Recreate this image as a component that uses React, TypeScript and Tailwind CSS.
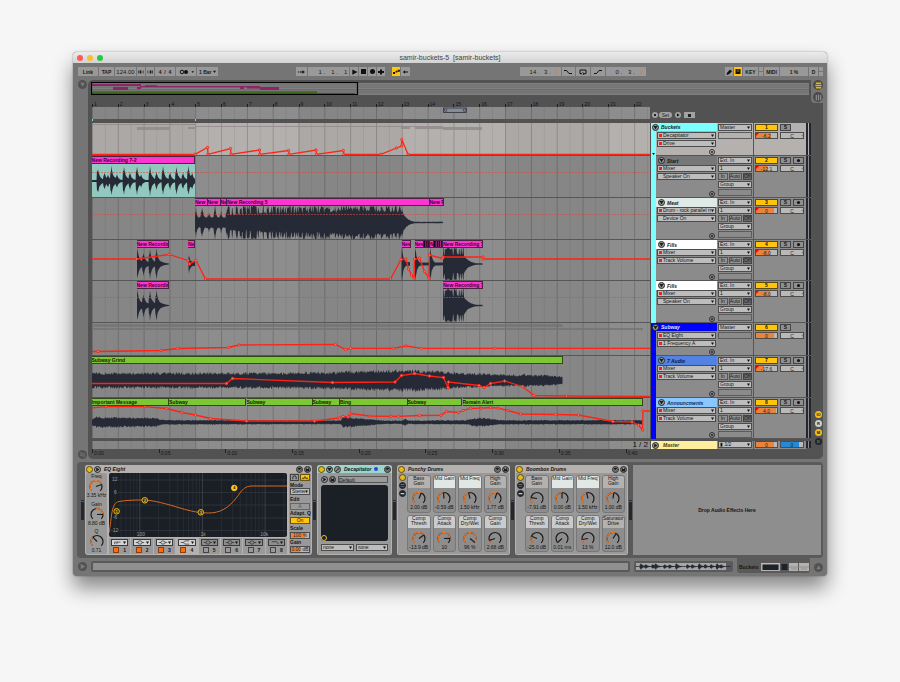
import React from "react";

/* ---------- timeline geometry ---------- */
const LANE_X = 92;
const LANE_W = 558;
const BAR = 25.82;
const pct = (n: number) => `${(n / LANE_W) * 100}%`;

type Pt = [number, number];
type Clip = { x0: number; x1: number; label: string; slices?: boolean };
type Hit = { x: number; a: number; d: number };

function rnd(i: number) {
  const s = Math.sin(i * 12.9898) * 43758.5453;
  return s - Math.floor(s);
}

function wave(x0: number, x1: number, mid: number, env: (x: number) => number, rough: number) {
  const up: string[] = [];
  const down: string[] = [];
  for (let x = x0; x <= x1; x += 0.5) {
    const a = env(x);
    up.push(`${x.toFixed(1)},${(mid - a * (1 - rough * rnd(x * 3.1))).toFixed(1)}`);
    down.unshift(`${x.toFixed(1)},${(mid + a * (1 - rough * rnd(x * 7.7 + 5))).toFixed(1)}`);
  }
  return `M${up.join("L")}L${down.join("L")}Z`;
}

const hits = (list: Hit[], floor = 0.6) => (x: number) =>
  list.reduce((m, h) => {
    const dx = x - h.x;
    if (dx < -1) return m;
    if (dx < 0) return Math.max(m, h.a * 0.7);
    return Math.max(m, h.a * (0.6 * Math.exp(-dx / 1.1) + 0.45 * Math.exp(-dx / h.d)));
  }, floor);

const ramp = (pts: Pt[]) => (x: number) => {
  for (let i = 1; i < pts.length; i++) {
    if (x <= pts[i][0]) {
      const [ax, ay] = pts[i - 1];
      const [bx, by] = pts[i];
      return ay + ((by - ay) * (x - ax)) / (bx - ax || 1);
    }
  }
  return pts[pts.length - 1][1];
};

const drumHits: Hit[] = [
  [97.7, 15], [104.5, 9], [108, 7], [111.5, 15], [117, 7], [124, 15], [130, 9], [137, 15], [141, 7],
  [150, 15], [156.5, 9], [163, 15], [170, 9], [176.5, 14], [183, 9], [188.5, 15], [192, 9],
].map(([x, a]) => ({ x, a, d: 4.5 }));

const fillHits: Hit[] = [[137.5, 16], [143.5, 12], [150, 15], [156.5, 15]].map(([x, a]) => ({ x, a, d: 5 }));

const meatEnv = (x: number) => {
  if (x < 228) return hits([[196, 15], [202, 18], [209, 11], [215, 18], [221, 12], [227, 16]].map(([hx, a]) => ({ x: hx, a, d: 6 })), 6)(x);
  if (x < 402) {
    const solid = ramp([[228, 9], [270, 11], [320, 12], [350, 14], [402, 13]])(x);
    return rnd(Math.floor(x) * 1.7) > 0.45 ? 17.5 : solid;
  }
  return Math.max(0.8, 14 * Math.exp(-(x - 402) / 4.5));
};

const endEnv = (x: number) =>
  x < 464 ? (rnd(Math.floor(x) * 2.3) > 0.75 ? 11 : 17.5) : Math.max(0.8, 10 * Math.exp(-(x - 464) / 5));

/* ---------- track data ---------- */
type Track = {
  top: number;
  name: string;
  num: number;
  group?: boolean;
  parent: "bucket" | "subway";
  head: string;
  size: string;
  params: [string, string];
  dots: [boolean, boolean];
  vol: string;
  fill: number;
  mark?: boolean;
  clips?: Clip[];
  tone?: "pink" | "green";
  waves?: string[];
  back?: [number, number];
  auto?: Pt[];
  dash?: number;
  minis?: [number, number, number, number][];
};

const tracks: Track[] = [
  {
    top: 123, name: "Buckets", num: 1, group: true, parent: "bucket", head: "bg-[#7dffff] text-[#123]", size: "h-[33px]",
    params: ["Decapitator", "Drive"], dots: [true, true], vol: "-6.2", fill: 70, mark: true,
    minis: [[92, 195, 124, 1], [137, 169, 127, 3], [188, 195, 127, 2], [195, 443, 126, 1], [401, 410, 127, 2], [415, 443, 127, 2], [443, 482, 127, 3]],
    auto: [[92, 154.3], [195, 154.3], [207.5, 147.5], [208, 154.3], [230.5, 148.5], [231, 154.3], [259.5, 150], [259.8, 154.3], [288.5, 150.5], [289, 154.3], [316, 150], [316.5, 154.3], [343.3, 150.5], [343.8, 154.3], [381, 154.3], [396.5, 148], [401.5, 146], [401.8, 139.5], [408, 154.3], [650, 154.3]],
  },
  {
    top: 156, name: "Start", num: 2, parent: "bucket", head: "bg-[#777] text-[#151515]", size: "h-[42px]",
    params: ["Mixer", "Speaker On"], dots: [true, false], vol: "-12.1", fill: 55, mark: true,
    clips: [{ x0: 91.5, x1: 195, label: "New Recording 7-2" }], tone: "pink", back: [92, 195],
    waves: [wave(92, 195, 181, hits(drumHits, 1), 0.15)], dash: 172.5,
  },
  {
    top: 198, name: "Meat", num: 3, parent: "bucket", head: "bg-[#dfe9e6] text-[#222]", size: "h-[42px]",
    params: ["Drum - rock parallel rm", "Device On"], dots: [true, false], vol: "0", fill: 84, mark: true,
    clips: [
      { x0: 195, x1: 207.5, label: "New" }, { x0: 207.5, x1: 220.5, label: "New" }, { x0: 220.5, x1: 227, label: "Ne" },
      { x0: 227, x1: 429.5, label: "New Recording 5" }, { x0: 429.5, x1: 443.5, label: "New F" },
    ],
    tone: "pink", waves: [wave(195, 443, 222.5, meatEnv, 0.25)], dash: 214.5,
  },
  {
    top: 240, name: "Fills", num: 4, parent: "bucket", head: "bg-white text-[#222]", size: "h-[41px]",
    params: ["Mixer", "Track Volume"], dots: [true, true], vol: "-8.0", fill: 65, mark: true,
    clips: [
      { x0: 136.5, x1: 169, label: "New Recordin" }, { x0: 188, x1: 195, label: "Ne" }, { x0: 401.5, x1: 410.5, label: "New" },
      { x0: 414.5, x1: 424, label: "New" }, { x0: 424, x1: 430, label: "", slices: true }, { x0: 430, x1: 434, label: "N" },
      { x0: 434, x1: 443, label: "", slices: true }, { x0: 443, x1: 482.5, label: "New Recording 7" },
    ],
    tone: "pink",
    waves: [
      wave(137, 169, 264, hits(fillHits, 0.6), 0.15), wave(188.5, 195, 264, hits([{ x: 189, a: 9, d: 5 }], 2), 0.2),
      wave(401.5, 410, 264, hits([{ x: 402, a: 17, d: 3 }], 2), 0.2),
      wave(415, 443, 264, hits([{ x: 415.5, a: 16, d: 3 }, { x: 430.5, a: 17, d: 3 }], 1.6), 0.2),
      wave(443, 482.5, 264, endEnv, 0.2),
    ],
    auto: [[92, 259], [136.5, 259], [169, 254.5], [188, 260.5], [189.5, 264], [196, 260.5], [205.5, 279], [390.5, 279], [401, 259.5], [406, 259], [408.5, 269], [411.5, 275], [414, 278], [414.5, 259], [419.5, 258], [424.5, 271.5], [429, 278], [429.5, 255], [442.5, 258.5], [443, 257], [483, 257], [483, 259], [650, 259]],
  },
  {
    top: 281, name: "Fills", num: 5, parent: "bucket", head: "bg-white text-[#222]", size: "h-[42px]",
    params: ["Mixer", "Speaker On"], dots: [true, false], vol: "-8.0", fill: 65, mark: true,
    clips: [{ x0: 136.5, x1: 169, label: "New Recordin" }, { x0: 443, x1: 482.5, label: "New Recording 7" }], tone: "pink",
    waves: [wave(137, 169, 305.5, hits(fillHits, 0.6), 0.15), wave(443, 482.5, 305.5, endEnv, 0.2)], dash: 297.5,
  },
  {
    top: 323, name: "Subway", num: 6, group: true, parent: "subway", head: "bg-[#0000ff] text-[#dfe3ff]", size: "h-[33px]",
    params: ["EQ Eight", "1 Frequency A"], dots: [true, true], vol: "0", fill: 84,
    minis: [[92, 562.5, 324, 3], [92, 643, 328, 2]],
    auto: [[92, 351.5], [98, 351.5], [161, 350.5], [177.5, 348.5], [228.5, 347.5], [239, 345], [335.5, 344.5], [345.5, 349.5], [350.5, 348.3], [393.5, 348.3], [406, 346], [421.5, 348.3], [495, 348.3], [650, 348.3]],
  },
  {
    top: 356, name: "7 Audio", num: 7, parent: "subway", head: "bg-[#5283e2] text-[#0c1a44]", size: "h-[42px]",
    params: ["Mixer", "Track Volume"], dots: [true, true], vol: "-17.6", fill: 40, mark: true,
    clips: [{ x0: 91.5, x1: 563, label: "Subway Grind" }], tone: "green",
    waves: [wave(92, 562.5, 380.5, ramp([[92, 8.5], [280, 8.5], [340, 9.5], [400, 11.5], [425, 11], [470, 8], [518, 6], [523, 8], [528, 6], [550, 6], [562, 4]]), 0.36)],
    auto: [[92, 383.5], [226.5, 383.5], [232.5, 378.5], [332.5, 382.5], [395, 382], [401.5, 375.5], [414.5, 373.5], [429.5, 376], [443.5, 377.5], [448, 387.5], [448.5, 382], [479, 385.5], [484, 387.5], [490.5, 383.5], [504.5, 381], [522.5, 386.5], [534, 395.5], [566.5, 396], [650, 396.3]],
  },
  {
    top: 398, name: "Announcments", num: 8, parent: "subway", head: "bg-[#8ac6ff] text-[#10325c]", size: "h-[41px]",
    params: ["Mixer", "Track Volume"], dots: [true, true], vol: "4.0", fill: 95, mark: true,
    clips: [
      { x0: 91.5, x1: 169, label: "Important Message" }, { x0: 169, x1: 246.5, label: "Subway" }, { x0: 246.5, x1: 312.5, label: "Subway" },
      { x0: 312.5, x1: 340, label: "Subway" }, { x0: 340, x1: 407.5, label: "Bing" }, { x0: 407.5, x1: 462.5, label: "Subway" },
      { x0: 462.5, x1: 643, label: "Remain Alert" },
    ],
    tone: "green",
    waves: [wave(92, 642, 422.3, ramp([[92, 3], [96, 6], [155, 5], [164, 2.6], [341, 2.2], [343, 6], [358, 4.5], [375, 3], [385, 2], [402, 2], [405, 4.5], [408, 2], [465, 2.5], [478, 5], [492, 4], [500, 2.5], [642, 2.4]]), 0.4)],
    auto: [[92, 407.8], [106, 406.7], [145, 406.7], [166.5, 408.5], [182, 412.5], [195.5, 415], [210.5, 418.5], [246.5, 421], [314.5, 421], [339, 418], [343, 416.5], [348, 417], [350, 413.5], [370, 416], [391, 416.3], [398.5, 416.3], [419.5, 415.5], [441, 415.3], [446.5, 411.5], [458.5, 412.5], [463, 410.5], [470.5, 408.3], [481, 408.2], [490.5, 407.7], [498, 408.2], [508, 410.5], [520.5, 414], [555.5, 414.5], [578.5, 415], [613, 421.5], [632, 422], [638.5, 425], [642.5, 430], [643, 411], [650, 411]],
  },
];

/* ---------- shared pieces ---------- */
function Grid({ top, height, light }: { top: number; height: number; light?: boolean }) {
  const lines = [];
  for (let i = 0; i < 44; i++) {
    const x = LANE_X + (i * BAR) / 2;
    lines.push(<rect key={i} x={x} y={top} width={i % 2 ? 0.6 : 0.9} height={height} fill="#000" opacity={i % 2 ? 0.1 : 0.2} />);
  }
  return (
    <>
      <rect x={LANE_X} y={top} width={LANE_W} height={height} fill={light ? "#aca8a6" : "#868686"} />
      {[4, 12, 20].map((b) => (
        <rect key={b} x={LANE_X + b * BAR} y={top} width={Math.min(4 * BAR, LANE_W - b * BAR)} height={height} fill={light ? "#b4b0ae" : "#8d8d8d"} />
      ))}
      {lines}
    </>
  );
}

function Drop({ label, value, dot, indent }: { label: string; value: string; dot?: boolean; indent?: boolean }) {
  return (
    <div className="relative flex h-[7px] w-full min-w-0 items-center border border-[#4c4c4c] bg-[#bdbdbd]">
      {dot && <i className="ml-px size-[3px] shrink-0 bg-[#f02314]" />}
      {indent && !dot && <i className="w-[4px] shrink-0" />}
      <select aria-label={label} className="h-[5px] w-full min-w-0 appearance-none bg-transparent pr-1 pl-px leading-[5px] text-[#151515] outline-none">
        <option>{value}</option>
      </select>
      <svg viewBox="0 0 4 4" className="pointer-events-none absolute top-px right-px size-[3px]"><path d="M0 .5H4L2 4Z" fill="#111" /></svg>
    </div>
  );
}

function Value({ label, value, fill, tone, mark, knob }: { label: string; value: string; fill: number; tone: string; mark?: boolean; knob?: boolean }) {
  return (
    <div className="relative h-[7px] w-full border border-[#4c4c4c] bg-[#b9b9b9]">
      <div className={`absolute inset-y-0 left-0 ${tone}`} style={{ width: `${fill}%` }} />
      {mark && <svg viewBox="0 0 3 3" className="absolute top-0 left-0 size-[3px]"><path d="M0 0H3L0 3Z" fill="#f00" /></svg>}
      {knob && <svg viewBox="0 0 3 4" className="absolute top-px right-0 h-[3px] w-[2px]"><path d="M3 0V4L0 2Z" fill="#888" /></svg>}
      <input aria-label={label} defaultValue={value} className="absolute inset-0 h-[5px] w-full bg-transparent text-center leading-[5px] text-[#222] outline-none" />
    </div>
  );
}

function Round({ label, children, className = "" }: { label: string; children?: React.ReactNode; className?: string }) {
  return (
    <button aria-label={label} className={`grid size-[7px] shrink-0 place-items-center rounded-full border ${className || "border-[#2a2a2a] bg-[#9a9a9a] text-[#1c1c1c]"}`}>
      <svg viewBox="0 0 8 8" className="size-[5px]" fill="currentColor" stroke="none">{children}</svg>
    </button>
  );
}

const wrench = <path d="M1 6.2 4 3.4A2 2 0 0 1 6.4 1L5.2 2.3 6 3 7.2 1.8A2 2 0 0 1 4.8 4.2L2 7.2Z" />;
const downTri = <path d="M.8 1.5H7.2L4 7Z" />;
const rightTri = <path d="M2 .8 7 4 2 7.2Z" />;
const disk = <path d="M1 1H6L7 2V7H1ZM2.5 1.5V3.2H5.2V1.5Z" fillRule="evenodd" />;
const hot = <path d="M4 .8a3.2 3.2 0 1 0 .1 0M2 3 4 5.2 6.4 2.4 6 5.5 4 6.5 2 5.5Z" fillRule="evenodd" />;

/* ---------- transport bar ---------- */
function Cell({ w, children, label, on }: { w: string; children: React.ReactNode; label?: string; on?: boolean }) {
  return (
    <button aria-label={label} className={`flex h-[9px] items-center justify-center whitespace-pre ${w} ${on ? "bg-[#ffc40c]" : "bg-[#999]"}`}>
      {children}
    </button>
  );
}

function Glyph({ d, w = "w-[8px]", stroke }: { d: string; w?: string; stroke?: boolean }) {
  return (
    <svg viewBox="0 0 8 6" className={`h-[6px] ${w}`} fill={stroke ? "none" : "#111"} stroke={stroke ? "#111" : "none"} strokeWidth="1">
      <path d={d} />
    </svg>
  );
}

function Position({ w, parts }: { w: string; parts: [string, string, string] }) {
  return (
    <Cell w={w}>
      <span className="flex w-full justify-between pr-[2px] pl-[10px] text-[6px] font-normal">
        <span>{parts[0]}</span><span>{parts[1]}</span>
        <span className={parts[2] === "2" ? "text-[#e07a2c]" : ""}>{parts[2]}</span>
      </span>
    </Cell>
  );
}

function Transport() {
  return (
    <div className="flex h-[17px] items-center pr-1 pl-[5px] font-bold text-[#1a1a1a]">
      <div className="flex gap-px">
        <Cell w="w-[20px]">Link</Cell>
        <Cell w="w-[15px]">TAP</Cell>
        <Cell w="w-[21px]"><span className="text-[6px] font-normal">124.00</span></Cell>
        <Cell w="w-[8px]" label="Nudge down"><Glyph d="M.5 1H1.8V5H.5ZM2.7 1H4V5H2.7ZM4.9 1H5.6V5H4.9ZM7 1H7.6V5H7Z" w="w-[6px]" /></Cell>
        <Cell w="w-[8px]" label="Nudge up"><Glyph d="M.5 1H1V5H.5ZM2.4 1H3V5H2.4ZM4 1H5.3V5H4ZM6.2 1H7.5V5H6.2Z" w="w-[6px]" /></Cell>
        <Cell w="w-[20px]">4  /  4</Cell>
        <Cell w="w-[20px]" label="Metronome">
          <svg viewBox="0 0 18 6" className="h-[6px] w-[18px]"><circle cx="5" cy="3" r="1.8" fill="none" stroke="#111" /><circle cx="9" cy="3" r="2" fill="#111" /><path d="M14.5 2.2H17L15.8 4Z" fill="#111" /></svg>
        </Cell>
        <Cell w="w-[21px]" label="Quantization">
          1 Bar <svg viewBox="0 0 4 4" className="size-[3px]"><path d="M0 1H4L2 4Z" fill="#111" /></svg>
        </Cell>
      </div>
      <div className="grow-[79]" />
      <div className="flex gap-px">
        <Cell w="w-[11px]" label="Follow"><Glyph d="M0 2.5H1.2V3.5H0ZM2 2.5H5V1L8 3 5 5V3.5H2Z" w="w-[7px]" /></Cell>
        <Position w="w-[41px]" parts={["1 .", "1 .", "1"]} />
        <Cell w="w-[8px]" label="Play"><Glyph d="M1.5 0 7.5 3 1.5 6Z" w="w-[7px]" /></Cell>
        <Cell w="w-[8px]" label="Stop"><i className="size-[5px] bg-[#111]" /></Cell>
        <Cell w="w-[8px]" label="Record"><i className="size-[5px] rounded-full bg-[#111]" /></Cell>
        <Cell w="w-[8px]" label="Overdub"><Glyph d="M3 .5H5V2H7V4H5V5.5H3V4H1V2H3Z" /></Cell>
        <i className="w-[5px]" />
        <Cell w="w-[8px]" label="Automation arm" on><Glyph d="M0 3H2.4V5.4H0ZM3 1.7H5V3.7H3ZM5.4 .4H7.8V2.8H5.4Z" w="w-[7px]" /></Cell>
        <Cell w="w-[9px]" label="Re-enable automation"><Glyph d="M1 3 3.5 1V2.5H7V3.5H3.5V5Z" w="w-[7px]" /></Cell>
      </div>
      <div className="grow-[110]" />
      <div className="flex gap-px">
        <Position w="w-[41px]" parts={["14 .", "3 .", "2"]} />
        <Cell w="w-[13px]" label="Punch in"><Glyph d="M0 1.5H2.5L5 4.5H8" stroke /></Cell>
        <Cell w="w-[14px]" label="Loop"><Glyph d="M3 4.7H1V1H7V4.7H5M3.5 3.4 5 4.7 3.5 6" stroke /></Cell>
        <Cell w="w-[14px]" label="Punch out"><Glyph d="M0 4.5H2.5L5 1.5H8" stroke /></Cell>
        <Position w="w-[40px]" parts={["0 .", "3 .", "2"]} />
      </div>
      <div className="grow-[80]" />
      <div className="flex gap-px">
        <Cell w="w-[8px]" label="Draw mode"><Glyph d="M1.5 6 2 3.8 5 .6 7 2.2 4 5.2Z" /></Cell>
        <Cell w="w-[8px]" label="Computer keyboard" on><Glyph d="M1.5 0H2.9V3H3.3V0H4.7V3H5.1V0H6.5V5H1.5Z" /></Cell>
        <Cell w="w-[15px]">KEY</Cell>
        <Cell w="w-[4px]" label="Key indicator"><i className="h-px w-full bg-[#777]" /></Cell>
        <Cell w="w-[15px]">MIDI</Cell>
        <Cell w="w-[28px]">1 %</Cell>
        <Cell w="w-[9px]">D</Cell>
        <Cell w="w-[4px]" label="MIDI indicator"><i className="h-px w-full bg-[#777]" /></Cell>
      </div>
    </div>
  );
}

/* ---------- arrangement ---------- */
function Overview() {
  const bars: [number, number, number, number, string][] = [
    [92, 84, 49, 2, "#8c2468"], [113, 87, 15, 3, "#8c2468"], [137, 87, 4, 2, "#8c2468"], [140, 86, 120, 1.3, "#8c2468"],
    [145, 85.3, 12, 1, "#6e3058"], [240, 87, 4, 2, "#8c2468"], [247, 87, 13, 1.6, "#8c2468"], [260, 87, 19, 3, "#8c2468"], [92, 91.3, 225, 2.7, "#3d6a1e"], [317, 93, 38, 1, "#3d6a1e"],
  ];
  return (
    <svg viewBox="91 82 718 13" preserveAspectRatio="none" className="block h-[13px] w-full">
      <rect x="91" y="83" width="718" height="12" fill="#808080" />
      {[84.6, 86.7, 89, 90.7, 92.6].map((y) => <rect key={y} x="91" y={y} width="718" height=".6" fill="#626262" />)}
      {bars.map(([x, y, w, h, f], i) => <rect key={i} x={x} y={y} width={w} height={h} fill={f} />)}
      <rect x="91.5" y="82.5" width="266" height="12" fill="none" stroke="#000" strokeWidth="1.2" />
    </svg>
  );
}

function Lane({ t }: { t: Track }) {
  const h = t.group ? 33 : t.size === "h-[42px]" ? 42 : 41;
  return (
    <div className="relative min-w-0 flex-1 overflow-hidden border-b border-[#565656]">
      <svg viewBox={`${LANE_X} ${t.top} ${LANE_W} ${h - 1}`} preserveAspectRatio="none" className="block size-full">
        <Grid top={t.top} height={h} light={t.num === 1} />
        {t.back && <rect x={t.back[0]} y={t.top + 8} width={t.back[1] - t.back[0]} height={h - 8} fill="#92c9bf" />}
        {t.minis?.map(([a, b, y, mh], i) => <rect key={i} x={a} y={y} width={b - a} height={mh} fill={t.num === 1 ? "#8e8a88" : "#737373"} opacity=".8" />)}
        {t.waves?.map((d, i) => <path key={i} d={d} fill="#262a37" />)}
        {t.dash && <path d={`M92 ${t.dash}H650`} stroke="#d8493c" strokeWidth=".8" strokeDasharray="2 1" opacity=".75" />}
        {t.auto && (
          <g fill="none" stroke="#ff2315">
            <path d={`M${t.auto.map((p) => p.join(",")).join("L")}`} strokeWidth="1.3" />
            {t.auto.slice(1, -1).map(([x, y], i) => <circle key={i} cx={x} cy={y} r="1.2" strokeWidth=".9" fill="#d98a80" />)}
          </g>
        )}
      </svg>
      {t.clips?.map((c, i) => (
        <div
          key={i}
          className={`absolute top-0 h-[8px] overflow-hidden border-y border-r font-bold whitespace-nowrap leading-[6px] ${t.tone === "green" ? "border-[#33471d] bg-[#7bc832] text-[#14240a]" : "border-[#4a2442] bg-[#ff35d2] text-[#3a0530]"}`}
          style={{ left: pct(c.x0 - LANE_X), width: pct(c.x1 - c.x0) }}
        >
          {c.slices ? (
            <svg viewBox="0 0 9 6" preserveAspectRatio="none" className="block size-full"><path d="M0 0H2V6H0ZM2.8 0H5V6H2.8ZM5.5 0H6.8V6H5.5ZM7.5 0H9V6H7.5Z" fill="#1c0718" /></svg>
          ) : c.label}
        </div>
      ))}
    </div>
  );
}

function Strip({ t }: { t: Track }) {
  const tone = t.num === 1 ? "bg-[#b5b1af]" : "bg-[#8b8b8b]";
  const bar = t.parent === "bucket" ? "bg-[#7dffff]" : "bg-[#0000ff]";
  return (
    <div className="flex w-[160px] shrink-0">
      <div className="flex w-[66px] flex-col">
        {t.group && (
          <div className={`flex h-[8px] items-center gap-[2px] pl-px font-bold italic ${t.head}`}>
            <Round label="Fold group">{downTri}</Round><span>{t.name}</span>
          </div>
        )}
        <div className="flex min-h-0 flex-1">
          <div className={`flex w-[5px] items-end justify-center pb-px ${bar}`}>
            {t.group && <svg viewBox="0 0 4 3" className="h-[2px] w-[3px]"><path d="M0 0H4L2 3Z" /></svg>}
          </div>
          <div className={`flex min-w-0 flex-1 flex-col border-b border-[#565656] ${tone}`}>
            {!t.group && (
              <div className={`flex h-[9px] items-center gap-[2px] pl-[2px] font-bold italic ${t.head}`}>
                <Round label="Fold track">{downTri}</Round><span>{t.name}</span>
              </div>
            )}
            <div className={`flex flex-col gap-px px-px ${t.group ? "pt-px" : ""}`}>
              <Drop label={`${t.name} device`} value={t.params[0]} dot={t.dots[0]} indent />
              <Drop label={`${t.name} parameter`} value={t.params[1]} dot={t.dots[1]} indent />
            </div>
            <div className="mt-auto mr-[2px] self-end">
              <button aria-label="Add lane" className="grid size-[6px] place-items-center rounded-full border border-[#333]"><i className="size-[2px] rounded-full bg-[#222]" /></button>
            </div>
          </div>
        </div>
      </div>
      <div className={`flex w-[37px] flex-col gap-px border-r border-b border-[#565656] px-px pt-px ${tone}`}>
        <Drop label="Input" value={t.group ? "Master" : "Ext. In"} />
        {t.group ? <div className="h-[7px] border border-[#5b5b5b]" /> : (
          <>
            <Drop label="Channel" value="1" />
            <div className="flex h-[7px] gap-px leading-[5px]">
              <button className="flex-1 border border-[#555] bg-[#939393]">In</button>
              <button className="w-[13px] border border-[#555] bg-[#939393]">Auto</button>
              <button className="flex-1 border border-[#444] bg-[#6d6d6d]">Off</button>
            </div>
            <Drop label="Output" value="Group" />
            <div className="h-[7px] border border-[#5b5b5b]" />
          </>
        )}
      </div>
      <div className={`flex flex-1 flex-col gap-px border-b border-[#565656] px-px pt-px ${tone}`}>
        <div className="flex h-[7px] gap-[2px] font-bold leading-[5px]">
          <button className="w-[23px] border border-[#5a4a10] bg-[#ffc40c]">{t.num}</button>
          <button className="w-[11px] border border-[#444] bg-[#8f8f8f]">S</button>
          {!t.group && <button aria-label="Arm" className="grid w-[11px] place-items-center border border-[#444] bg-[#8f8f8f]"><i className="size-[3px] rounded-full bg-[#111]" /></button>}
        </div>
        <div className="flex gap-[2px]">
          <div className="w-[23px]"><Value label="Volume" value={t.vol} fill={t.fill} tone="bg-[#e8843c]" mark={t.mark} /></div>
          <div className="w-[24px]"><Value label="Pan" value="C" fill={0} tone="bg-[#e8843c]" knob /></div>
        </div>
      </div>
      <Meter tone={tone} />
    </div>
  );
}

function Meter({ tone }: { tone: string }) {
  return (
    <div className={`flex w-[5px] gap-px border-b border-[#565656] ${tone}`}>
      <i className="w-[2px] bg-[#23262e]" /><i className="w-[2px] bg-[#23262e]" />
    </div>
  );
}

function Arrangement() {
  return (
    <div className="flex">
      <div className="flex w-[15px] flex-col items-center justify-between pl-[3px]">
        <Gutter label="Browser"><path d="M1.5 2H6.5L4 6.5Z" /></Gutter>
        <Gutter label="Groove pool"><path d="M1 3Q2.5 1.5 4 3T7 3M1 5.3Q2.5 3.8 4 5.3T7 5.3" fill="none" stroke="currentColor" /></Gutter>
      </div>
      <div className="relative mr-1 min-w-0 flex-1 rounded-[5px] bg-[#525252] pt-[2px] pr-[12px] pl-[3px]">
        <div className="absolute top-0 right-0 flex h-[23px] w-[12px] flex-col items-end gap-[2px] rounded-bl-[4px] bg-[#757575]">
          <button aria-label="Arrangement view" className="grid size-[10px] place-items-center rounded-full bg-[#4b4b4b]">
            <svg viewBox="0 0 8 8" className="size-[7px]"><path d="M1 1.5H7M.5 4H7.5M1 6.5H7" stroke="#e8b417" strokeWidth="1.6" /></svg>
          </button>
          <button aria-label="Session view" className="grid size-[10px] place-items-center rounded-full bg-[#4b4b4b]">
            <svg viewBox="0 0 8 8" className="size-[7px]"><path d="M1.5 1V7M4 .5V7.5M6.5 1V7" stroke="#8b8b8b" strokeWidth="1.4" /></svg>
          </button>
        </div>
        <div className="pr-[2px]"><Overview /></div>

        {/* bar ruler */}
        <div className="mt-[5px] ml-px flex h-[7px] overflow-hidden pr-[161px] text-[#141414]">
          {Array.from({ length: 22 }, (_, i) => (
            <div key={i} className="flex shrink-0 items-end leading-[6px]" style={{ width: i === 21 ? pct(14) : pct(BAR) }}>
              <i className="mr-px h-[3px] w-px bg-[#1c1c1c]" />{i + 1}
            </div>
          ))}
        </div>

        {/* scrub area */}
        <div className="ml-px flex h-[12px]">
          <div className="relative min-w-0 flex-1">
            <svg viewBox={`${LANE_X} 107 ${LANE_W} 12`} preserveAspectRatio="none" className="block size-full">
              <Grid top={107} height={12} />
              <rect x="443.5" y="108" width="23" height="4.5" fill="#868b96" stroke="#2e3340" strokeWidth=".8" />
              <circle cx="445.5" cy="110.2" r="1.3" fill="none" stroke="#2e3340" strokeWidth=".7" />
              <circle cx="464.5" cy="110.2" r="1.3" fill="none" stroke="#2e3340" strokeWidth=".7" />
            </svg>
          </div>
          <div className="ml-px flex w-[160px] items-end gap-px pb-px pl-px leading-[6px] text-[#222]">
            <button aria-label="Previous locator" className="grid size-[6px] place-items-center rounded-full bg-[#a2a2a2]"><i className="size-[2px] bg-[#222]" /></button>
            <button className="h-[6px] w-[13px] rounded-full bg-[#a2a2a2] leading-[6px]">Set</button>
            <i className="w-px" />
            <button aria-label="Next locator" className="grid size-[6px] place-items-center rounded-full bg-[#a2a2a2]"><svg viewBox="0 0 8 8" className="size-[4px]">{rightTri}</svg></button>
            <i className="w-px" />
            <button aria-label="Lock envelopes" className="grid h-[6px] w-[11px] place-items-center bg-[#a2a2a2]"><i className="h-[3px] w-[3px] bg-[#222]" /></button>
          </div>
        </div>
        <div className="ml-px flex h-[4px] pr-[161px]"><i className="h-[2px] w-px bg-[#7de0e4]" /><i className="h-[2px] w-px bg-[#7de0e4]" style={{ marginLeft: pct(4 * BAR - 1) }} /></div>

        {tracks.map((t) => (
          <div key={t.num} className={`ml-px flex ${t.size}`}>
            <Lane t={t} />
            <div className="w-px" />
            <Strip t={t} />
          </div>
        ))}

        {/* master */}
        <div className="ml-px flex pt-[2px]">
          <div className="relative h-[8px] min-w-0 flex-1">
            <svg viewBox={`${LANE_X} 441 ${LANE_W} 8`} preserveAspectRatio="none" className="block size-full"><Grid top={441} height={8} /></svg>
            <span className="absolute top-0 right-[2px] text-[8px] leading-[8px] text-[#111]">1 / 2</span>
          </div>
          <div className="ml-px flex h-[8px] w-[160px] bg-[#8b8b8b]">
            <div className="flex w-[66px] items-center gap-1 bg-[#ffee9e] pl-px font-bold text-[#4a3c0a] italic"><Round label="Unfold master">{rightTri}</Round>Master</div>
            <div className="w-[37px] border-r border-[#565656] px-px"><Drop label="Master output" value="▮ 1/2" /></div>
            <div className="flex flex-1 gap-[2px] px-px">
              <div className="w-[23px]"><Value label="Master volume" value="0" fill={84} tone="bg-[#e8843c]" /></div>
              <div className="w-[24px]"><Value label="Cue volume" value="0" fill={84} tone="bg-[#2389d8]" /></div>
            </div>
            <Meter tone="bg-[#8b8b8b]" />
          </div>
        </div>

        {/* time ruler */}
        <div className="ml-px flex h-[10px] overflow-hidden pr-[161px] leading-[8px] text-[#161616]">
          {["0:00", "0:05", "0:10", "0:15", "0:20", "0:25", "0:30", "0:35", "0:40"].map((s, i) => (
            <div key={s} className="flex shrink-0" style={{ width: i === 8 ? pct(24) : pct(66.7) }}><i className="mr-px h-[4px] w-px bg-[#222]" />{s}</div>
          ))}
        </div>

        <div className="absolute right-0 bottom-[14px] flex flex-col gap-[2px] text-[4px] font-bold">
          <Toggle tone="bg-[#f5bd1f]">IO</Toggle>
          <Toggle tone="bg-[#d0d0d0]">R</Toggle>
          <Toggle tone="bg-[#f5bd1f]">M</Toggle>
          <Toggle tone="bg-[#22262c] text-[#777]">D</Toggle>
        </div>
      </div>
    </div>
  );
}

function Toggle({ tone, children }: { tone: string; children: string }) {
  return <button className={`mr-px size-[7px] rounded-full leading-[7px] ${tone}`}>{children}</button>;
}

function Gutter({ label, children }: { label: string; children: React.ReactNode }) {
  return (
    <button aria-label={label} className="grid size-[9px] shrink-0 place-items-center rounded-full bg-[#525252] text-[#7c7c7c]">
      <svg viewBox="0 0 8 8" className="size-[7px]" fill="currentColor">{children}</svg>
    </button>
  );
}

/* ---------- devices ---------- */
function Knob({ v, from = 0, flag }: { v: number; from?: number; flag?: boolean }) {
  const at = (f: number, r: number) => {
    const a = ((135 + 270 * f) * Math.PI) / 180;
    return `${(8 + r * Math.cos(a)).toFixed(2)} ${(7.5 + r * Math.sin(a)).toFixed(2)}`;
  };
  const arc = (a: number, b: number) => `M${at(a, 6)}A6 6 0 ${(b - a) * 270 > 180 ? 1 : 0} 1 ${at(b, 6)}`;
  return (
    <svg viewBox="0 0 16 14" className="h-[14px] w-[16px]" fill="none" strokeWidth="1.2">
      <path d={arc(0, 1)} stroke="#1c1c1c" />
      <path d={arc(Math.min(from, v), Math.max(from, v))} stroke="#ef7a2c" />
      <path d={`M8 7.5L${at(v, 6)}`} stroke="#1c1c1c" />
      {flag && <path d="M5.5 0H10.5L8 2.5Z" fill="#ef6a1c" stroke="none" />}
    </svg>
  );
}

function LevelBar() {
  return (
    <div className="flex w-[5px] shrink-0 items-center justify-center">
      <div className="flex h-[20px] w-[3px] flex-col gap-px"><i className="h-px bg-[#2c3038]" /><i className="flex-1 bg-[#23272f]" /></div>
    </div>
  );
}

const yellowRing = "border-[#5a4a12] bg-[#e8b822] text-[#f7d560]";

function DeviceHead({ name, tone, left, right }: { name: string; tone: string; left?: React.ReactNode; right: React.ReactNode }) {
  return (
    <div className={`flex h-[8px] items-center gap-px px-px ${tone}`}>
      <Round label={`${name} on`} className={yellowRing} />
      {left}
      <span className="ml-[2px] flex-1 font-bold whitespace-nowrap italic">{name}{name === "Decapitator" && <b className="ml-[2px] inline-block size-[4px] rounded-full bg-[#3a3ae8]" />}</span>
      {right}
    </div>
  );
}

function SideKnob({ label, value, v, from, flag }: { label: string; value: string; v: number; from?: number; flag?: boolean }) {
  return (
    <div className="flex flex-col items-center leading-[5px]"><span>{label}</span><Knob v={v} from={from} flag={flag} /><span className="whitespace-nowrap">{value}</span></div>
  );
}

const bell = "M0 3H2.500A2.500 2 0 0 1 7.500 3 2.500 2 0 0 1 2.500 3M7.500 3H10";
const filterShapes = ["M1 5V2.500H8M3 5 5 2.500", bell, bell, "M0 3H3Q4 1 6 1H10M3 3Q4 5 6 5H10", bell, bell, bell, "M1 2H7Q8 2 9 5"];

function EqEight() {
  const decades = [-32, 31, 94, 157];
  return (
    <section className="flex w-[227px] shrink-0 flex-col overflow-hidden rounded-[3px] bg-[#b5b1ae] pb-px">
      <DeviceHead name="EQ Eight" tone="bg-[#b5b1ae]" left={<Round label="Show display">{rightTri}</Round>} right={<><Round label="Hot-swap">{hot}</Round><Round label="Save">{disk}</Round></>} />
      <div className="flex min-h-0 flex-1 gap-[2px] px-px">
        <div className="flex w-[21px] flex-col items-center justify-between rounded-[2px] bg-[#999] py-px">
          <SideKnob label="Freq" value="3.35 kHz" v={0.76} />
          <SideKnob label="Gain" value="8.80 dB" v={0.83} from={0.5} flag />
          <SideKnob label="Q" value="0.71" v={0.34} />
        </div>
        <div className="flex min-w-0 flex-1 flex-col gap-px">
          <svg viewBox="0 0 179 64" preserveAspectRatio="none" className="block h-[64px] w-full rounded-[2px]">
            <rect width="179" height="64" fill="#1a1f26" />
            {[7, 19.5, 32, 45, 57.5].map((y) => <path key={y} d={`M9 ${y}H179`} stroke="#343a42" strokeWidth=".7" />)}
            {decades.flatMap((d) => [1, 2, 3, 4, 5, 6, 7, 8, 9].map((n) => {
              const x = d + 63 * Math.log10(n);
              return x > 2 && x < 179 ? <path key={`${d}-${n}`} d={`M${x} 0V64`} stroke={n === 1 ? "#454b54" : "#2b3139"} strokeWidth=".7" /> : null;
            }))}
            <g fill="#969ba3" fontSize="5" fontFamily="Liberation Sans, sans-serif">
              <text x="3" y="8.500">12</text><text x="5" y="21">6</text><text x="4" y="46.500">-6</text><text x="2" y="59">-12</text>
              <text x="28" y="63">100</text><text x="92" y="63">1k</text><text x="152" y="63">10k</text>
            </g>
            <path d="M0 60C3 44 2 30 10 28.500C18 27 28 27 36 27C50 28 64 33 76 36.300C86 39 92 40 100 40C112 40 120 35 128 25C134 17 136 13 144 13H179" fill="none" stroke="#d8691c" strokeWidth="1" />
            {([[7.7, 38.3, 1], [36, 27.3, 2], [92.3, 39.3, 3], [126, 15, 4]] as const).map(([x, y, n]) => (
              <g key={n}>
                <circle cx={x} cy={y} r="2.800" fill={n === 4 ? "#ffc815" : "#3a3518"} stroke="#ffc815" strokeWidth=".9" />
                <text x={x} y={y + 1.4} textAnchor="middle" fontSize="4" fontWeight="bold" fill={n === 4 ? "#222" : "#ffc815"} fontFamily="Liberation Sans, sans-serif">{n}</text>
              </g>
            ))}
          </svg>
          <div className="grid flex-1 grid-cols-8 gap-px">
            {filterShapes.map((d, i) => (
              <div key={i} className={`flex flex-col items-center justify-between px-[2px] py-px ${i === 3 ? "bg-[#b5b1ae]" : "bg-[#999]"}`}>
                <div className={`flex h-[7px] w-full items-center justify-between border border-[#3a3a3a] px-px ${i < 4 ? "bg-[#d4d4d4]" : "bg-[#8d8d8d]"}`}>
                  <svg viewBox="0 0 10 6" className="h-[5px] w-[10px]" fill="none" stroke="#222" strokeWidth=".8"><path d={d} /></svg>
                  <svg viewBox="0 0 4 4" className="size-[3px]"><path d="M0 .5H4L2 4Z" fill="#111" /></svg>
                </div>
                <label className="flex items-center gap-1 font-bold leading-[6px]">
                  <input type="checkbox" defaultChecked={i < 4} className="size-[6px] appearance-none border border-[#444] checked:border-[#8a3d10] checked:bg-[#ff6a0a]" />{i + 1}
                </label>
              </div>
            ))}
          </div>
        </div>
        <div className="flex w-[22px] flex-col justify-between overflow-hidden rounded-[2px] bg-[#999] p-px leading-[6px]">
          <div className="flex h-[7px] gap-px">
            <button aria-label="Audition" className="grid flex-1 place-items-center border border-[#444]"><svg viewBox="0 0 6 6" className="size-[5px]"><path d="M1 5V3a2 2 0 0 1 4 0V5" fill="none" stroke="#111" /></svg></button>
            <button aria-label="Analyze" className="grid flex-1 place-items-center border border-[#6a5510] bg-[#ffc40c]"><svg viewBox="0 0 8 5" className="h-[4px] w-[8px]"><path d="M0 4.500 1.500 2 2.500 4 4 .5 5.500 4 6.500 2 8 4.500" fill="none" stroke="#222" strokeWidth=".8" /></svg></button>
          </div>
          <b>Mode</b><Drop label="Mode" value="Stereo" />
          <b>Edit</b><button className="h-[7px] border border-[#666] leading-[5px] text-[#555]">A</button>
          <b className="whitespace-nowrap">Adapt. Q</b><button className="h-[7px] border border-[#6a5510] bg-[#ffc40c] leading-[5px]">On</button>
          <b>Scale</b><Value label="Scale" value="100 %" fill={80} tone="bg-[#f0843c]" />
          <b>Gain</b><Value label="Gain" value="0.00 dB" fill={50} tone="bg-[#f0843c]" />
        </div>
      </div>
    </section>
  );
}

function Decapitator() {
  return (
    <section className="flex w-[75px] shrink-0 flex-col overflow-hidden rounded-[3px] bg-[#999]">
      <DeviceHead name="Decapitator" tone="bg-[#9ad6cb]" left={<><Round label="Unfold">{downTri}</Round><Round label="Edit">{wrench}</Round></>} right={<Round label="Hot-swap">{hot}</Round>} />
      <div className="flex min-h-0 flex-1 flex-col border border-t-0 border-[#b5b1ae] px-[3px] pt-[3px] pb-[3px]">
        <div className="flex items-center gap-px">
          <Round label="Previous">{rightTri}</Round><Round label="Save preset">{disk}</Round>
          <input aria-label="Preset" defaultValue="Default" className="ml-px h-[7px] min-w-0 flex-1 border border-[#555] bg-transparent leading-[5px]" />
        </div>
        <div className="mt-[2px] flex flex-1 items-end rounded-[3px] bg-[#1b1f26]"><i className="size-[6px] rounded-full border border-[#f0bd1c]" /></div>
        <div className="mt-[3px] flex gap-[2px]"><Drop label="X parameter" value="none" /><Drop label="Y parameter" value="none" /></div>
      </div>
    </section>
  );
}

type K = [string, string, string, number, string?];
const hi = "bg-[#e1e7e5]";
const mid = "bg-[#cbcbcb]";

function Rack({ name, knobs }: { name: string; knobs: K[] }) {
  return (
    <section className="flex w-[113px] shrink-0 flex-col overflow-hidden rounded-[3px] bg-[#999]">
      <DeviceHead name={name} tone="bg-[#b5b1ae]" right={<><Round label="Hot-swap">{hot}</Round><Round label="Save">{disk}</Round></>} />
      <div className="flex min-h-0 flex-1 border-x border-b border-[#b5b1ae] pr-px">
        <div className="flex w-[9px] flex-col gap-px pt-px pl-px">
          <Round label="Macros" className={yellowRing} />
          <Round label="Chains" className="border-[#22262c] bg-[#22262c] text-[#888]"><path d="M1 2H7V3H1ZM1 5H7V6H1Z" /></Round>
          <Round label="Devices" className="border-[#22262c] bg-[#22262c] text-[#ccc]"><path d="M1 3H7V5H1Z" /></Round>
        </div>
        <div className="grid flex-1 grid-cols-4 grid-rows-2 gap-[2px] py-[2px] pr-px">
          {knobs.map(([a, b, value, v, tone], i) => (
            <div key={i} className="flex flex-col items-center rounded-[3px] border border-[#777] bg-[#8d8d8d] text-center whitespace-nowrap">
              <div className={`h-[12px] w-full rounded-t-[2px] leading-[5px] ${tone ?? "bg-[#b5b1ae]"}`}>{a}<br />{b}</div>
              <div className="mt-[3px] h-[14px]"><Knob v={v} /></div>
              <span className="leading-[5px]">{value}</span>
            </div>
          ))}
        </div>
      </div>
    </section>
  );
}

const punchy: K[] = [
  ["Bass", "Gain", "2.00 dB", 0.58], ["Mid Gain", "", "-0.59 dB", 0.48, hi], ["Mid Freq", "", "1.50 kHz", 0.45, hi], ["High", "Gain", "1.77 dB", 0.57],
  ["Comp", "Thresh", "-13.9 dB", 0.7, mid], ["Comp", "Attack", "10", 0.83, mid], ["Comp", "Dry/Wet", "96 %", 0.98, mid], ["Comp", "Gain", "2.68 dB", 0.1, mid],
];
const boombox: K[] = [
  ["Bass", "Gain", "-7.91 dB", 0.2], ["Mid Gain", "", "0.00 dB", 0.5, hi], ["Mid Freq", "", "1.50 kHz", 0.45, hi], ["High", "Gain", "1.00 dB", 0.53],
  ["Comp", "Thresh", "-25.0 dB", 0.25, mid], ["Comp", "Attack", "0.01 ms", 0.01, mid], ["Comp", "Dry/Wet", "13 %", 0.13, mid], ["Saturator", "Drive", "12.0 dB", 0.62],
];

/* ---------- page ---------- */
export default function App() {
  const preview = wave(0, 96, 5, hits([5, 10, 17, 20, 29, 34, 41, 52, 57, 64, 70, 76, 82, 86].map((x, i) => ({ x, a: i % 3 ? 3.5 : 5, d: 4 })), 0.6), 0.15);
  return (
    <main className="min-h-screen bg-[#f6f6f6] px-[73px] pt-[52px] pb-[90px] font-['Liberation_Sans',Arial,sans-serif] text-[5px] leading-[6px] text-[#151515]">
      <div className="overflow-hidden rounded-[4px] bg-[#757575] shadow-[0_12px_20px_rgba(0,0,0,0.45),0_0_2px_rgba(0,0,0,0.4)]">
        <header className="relative flex h-[11px] items-center gap-[4px] bg-linear-to-b from-[#ececec] to-[#d2d2d2] pl-[4px]">
          <button aria-label="Close" className="size-[6px] rounded-full bg-[#fc5b57]" />
          <button aria-label="Minimize" className="size-[6px] rounded-full bg-[#fdbc2e]" />
          <button aria-label="Zoom" className="size-[6px] rounded-full bg-[#27c840]" />
          <h1 className="absolute inset-x-0 text-center text-[7px] leading-[11px] text-[#444]">samir-buckets-5&nbsp; [samir-buckets]</h1>
        </header>
        <Transport />
        <Arrangement />

        <div className="mx-1 mt-[3px] flex h-[96px] rounded-[4px] bg-[#5a5a5a] py-[3px] pr-[2px] pl-[3px]">
          <LevelBar />
          <EqEight />
          <LevelBar />
          <Decapitator />
          <LevelBar />
          <Rack name="Punchy Drums" knobs={punchy} />
          <LevelBar />
          <Rack name="Boombox Drums" knobs={boombox} />
          <LevelBar />
          <div className="flex flex-1 items-center justify-center bg-[#8e8e8e] font-bold">Drop Audio Effects Here</div>
        </div>

        <footer className="flex h-[18px] items-start px-1">
          <div className="flex flex-1 items-center gap-[4px] pt-[3px] pl-px">
            <Gutter label="Info view">{rightTri}</Gutter>
            <div className="h-[11px] flex-1 rounded-[2px] border-2 border-[#5a5a5a] bg-[#909090]" />
            <div className="h-[11px] w-[99px] rounded-[2px] border-2 border-[#5a5a5a] bg-[#5a5a5a]">
              <svg viewBox="0 0 96 10" preserveAspectRatio="none" className="block size-full"><rect width="91" height="10" fill="#a6a6a6" /><path d={preview} fill="#262a37" /></svg>
            </div>
          </div>
          <div className="ml-1 flex h-[15px] w-[73px] items-center gap-[2px] rounded-b-[3px] bg-[#5a5a5a] pt-[3px] pl-[2px] font-bold">
            <span className="w-[20px]">Buckets</span>
            <svg viewBox="0 0 48 8" className="h-[8px] w-[48px]">
              <rect width="19" height="8" fill="#b5b1ae" /><rect width="19" height="1" fill="#6fe0d8" /><rect x="1.500" y="1.500" width="16" height="5.500" fill="#1e2329" />
              <rect x="20.500" y="1" width="6" height="6" fill="#1e2329" /><rect x="28" width="9" height="8" fill="#b5b1ae" /><rect x="38" width="10" height="8" fill="#b5b1ae" />
              <path d="M28 4H48M30 6H36M40 6H46" stroke="#888" strokeWidth=".8" />
            </svg>
          </div>
          <div className="flex w-[13px] justify-end pt-[5px]"><Gutter label="Device view"><path d="M4 1.500 6.500 6H1.500Z" /></Gutter></div>
        </footer>
      </div>
    </main>
  );
}
